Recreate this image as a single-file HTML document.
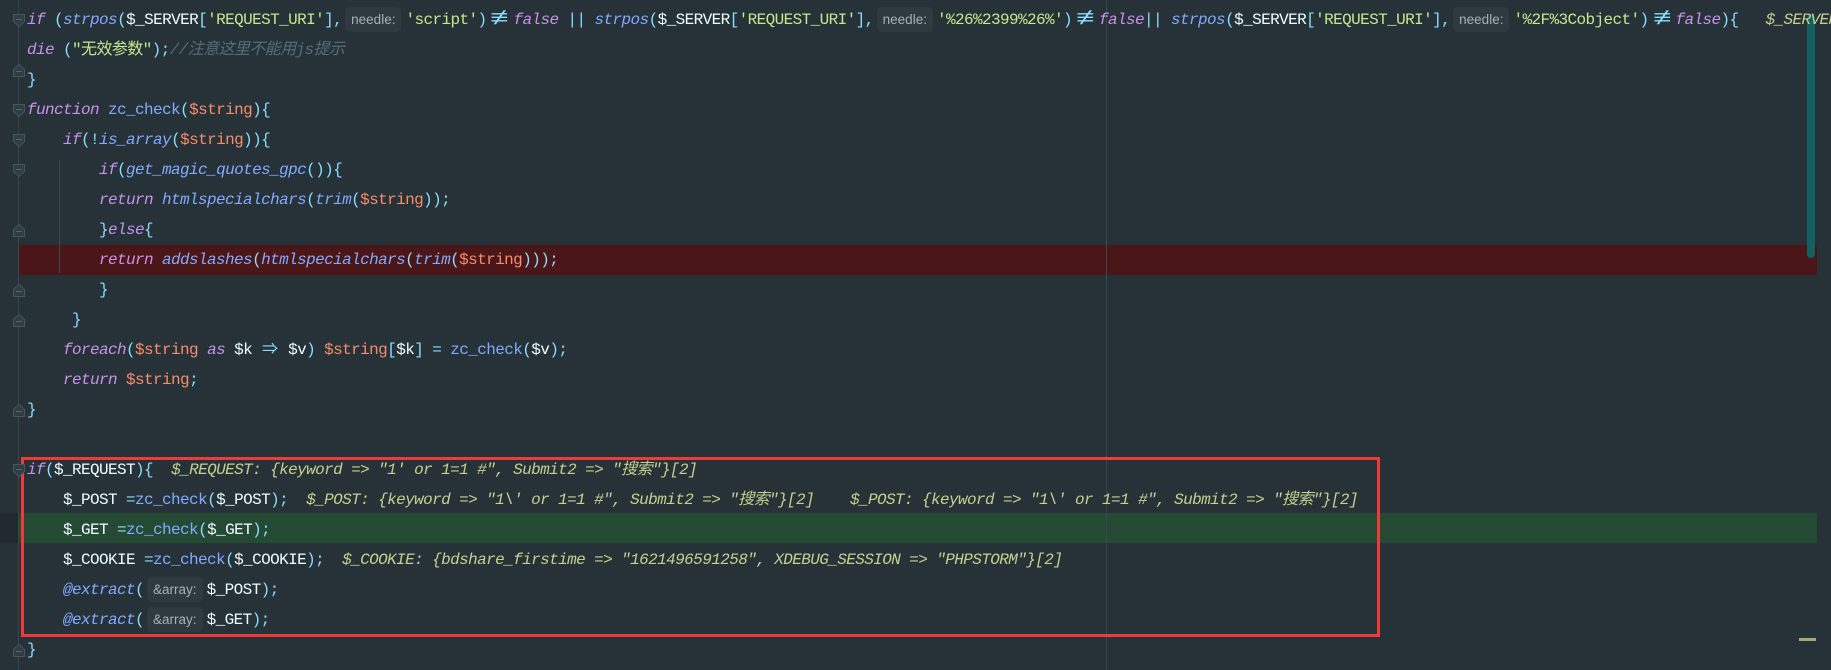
<!DOCTYPE html>
<html><head><meta charset="utf-8"><style>
*{margin:0;padding:0;box-sizing:border-box}
body{width:1831px;height:670px;background:#263238;overflow:hidden;position:relative;font-family:"Liberation Mono","Noto Sans CJK SC",monospace;font-size:16px;letter-spacing:-0.6px;color:#eeffff}
.ln{position:absolute;left:27px;height:30px;line-height:30px;white-space:pre}
.k{color:#c792ea;font-style:italic}
.f{color:#82aaff;font-style:italic}
.b{color:#82aaff}
.v{color:#f78c6c}
.p{color:#89ddff}
.s{color:#c3e88d}
.c{color:#546e7a;font-style:italic}
.d{color:#c5d08e;font-style:italic}
.h{display:inline-block;height:25px;line-height:25px;vertical-align:top;margin-top:2px;background:#2e3a40;border-radius:5px;color:#a7b0b5;font-family:"Liberation Sans",sans-serif;font-size:13.5px;letter-spacing:0;padding:0 6px;margin-left:3px;margin-right:4px}
.ne{display:inline-block;width:27px;text-align:center;color:#89ddff;font-size:20px;letter-spacing:0;transform:scaleX(1.6)}
.ar{display:inline-block;width:18px;text-align:center;color:#89ddff;letter-spacing:0}
.band{position:absolute;left:19px;width:1798px;height:30px}
</style></head><body>
<div class="band" style="top:245px;background:#4a1618"></div>
<div class="band" style="top:513px;background:#254a33"></div>
<div style="position:absolute;left:0;top:513px;width:19px;height:30px;background:#1f292e"></div>
<div style="position:absolute;left:18px;top:0;width:1px;height:670px;background:#37474f"></div>
<div style="position:absolute;left:1106px;top:0;width:1px;height:670px;background:#37474f"></div>
<div style="position:absolute;left:59px;top:160px;width:1px;height:113px;background:#37474f"></div>
<div style="position:absolute;left:1807px;top:14px;width:8px;height:244px;background:#12605f;border-radius:4px"></div>
<div style="position:absolute;left:1799px;top:638px;width:17px;height:3px;background:#a8a880"></div>
<div style="position:absolute;left:21px;top:457px;width:1359px;height:180px;border:3px solid #f03a3a"></div>

<svg style="position:absolute;left:0;top:0" width="40" height="670">
<g fill="#2f3d44" stroke="#46565e" stroke-width="1">
<path d="M13.5 14.5h11v7l-5.5 5l-5.5-5z"/>
<path d="M13.5 104.5h11v7l-5.5 5l-5.5-5z"/>
<path d="M13.5 134.5h11v7l-5.5 5l-5.5-5z"/>
<path d="M13.5 164.5h11v7l-5.5 5l-5.5-5z"/>
<path d="M13.5 464.5h11v7l-5.5 5l-5.5-5z"/>
<path d="M13.5 86.5h11v-7l-5.5-5l-5.5 5z" transform="translate(0,-10)"/>
<path d="M13.5 236.5h11v-7l-5.5-5l-5.5 5z"/>
<path d="M13.5 296.5h11v-7l-5.5-5l-5.5 5z"/>
<path d="M13.5 326.5h11v-7l-5.5-5l-5.5 5z"/>
<path d="M13.5 416.5h11v-7l-5.5-5l-5.5 5z"/>
<path d="M13.5 656.5h11v-7l-5.5-5l-5.5 5z"/>
</g>
<g stroke="#56666e" stroke-width="1">
<path d="M16 19.5h6M16 109.5h6M16 139.5h6M16 169.5h6M16 469.5h6M16 71.5h6M16 231.5h6M16 291.5h6M16 321.5h6M16 411.5h6M16 651.5h6"/>
</g>
</svg>

<div class="ln" style="top:5px"><span class="k">if</span> <span class="p">(</span><span class="f">strpos</span><span class="p">(</span>$_SERVER<span class="p">[</span><span class="s">'REQUEST_URI'</span><span class="p">],</span><span class="h">needle:</span><span class="s">'script'</span><span class="p">)</span><span class="ne">≢</span><span class="k">false</span> <span class="p">||</span> <span class="f">strpos</span><span class="p">(</span>$_SERVER<span class="p">[</span><span class="s">'REQUEST_URI'</span><span class="p">],</span><span class="h">needle:</span><span class="s">'%26%2399%26%'</span><span class="p">)</span><span class="ne">≢</span><span class="k">false</span><span class="p">||</span> <span class="f">strpos</span><span class="p">(</span>$_SERVER<span class="p">[</span><span class="s">'REQUEST_URI'</span><span class="p">],</span><span class="h">needle:</span><span class="s">'%2F%3Cobject'</span><span class="p">)</span><span class="ne">≢</span><span class="k">false</span><span class="p">){</span>   <span class="d">$_SERVER: {...}</span></div>
<div class="ln" style="top:35px"><span class="k">die</span> <span class="p">(</span><span class="s">"无效参数"</span><span class="p">);</span><span class="c">//注意这里不能用js提示</span></div>
<div class="ln" style="top:65px"><span class="p">}</span></div>
<div class="ln" style="top:95px"><span class="k">function</span> <span class="b">zc_check</span><span class="p">(</span><span class="v">$string</span><span class="p">){</span></div>
<div class="ln" style="top:125px">    <span class="k">if</span><span class="p">(!</span><span class="f">is_array</span><span class="p">(</span><span class="v">$string</span><span class="p">)){</span></div>
<div class="ln" style="top:155px">        <span class="k">if</span><span class="p">(</span><span class="f">get_magic_quotes_gpc</span><span class="p">()){</span></div>
<div class="ln" style="top:185px">        <span class="k">return</span> <span class="f">htmlspecialchars</span><span class="p">(</span><span class="f">trim</span><span class="p">(</span><span class="v">$string</span><span class="p">));</span></div>
<div class="ln" style="top:215px">        <span class="p">}</span><span class="k">else</span><span class="p">{</span></div>
<div class="ln" style="top:245px">        <span class="k">return</span> <span class="f">addslashes</span><span class="p">(</span><span class="f">htmlspecialchars</span><span class="p">(</span><span class="f">trim</span><span class="p">(</span><span class="v">$string</span><span class="p">)));</span></div>
<div class="ln" style="top:275px">        <span class="p">}</span></div>
<div class="ln" style="top:305px">     <span class="p">}</span></div>
<div class="ln" style="top:335px">    <span class="k">foreach</span><span class="p">(</span><span class="v">$string</span> <span class="k">as</span> $k <span class="ar">⇒</span> $v<span class="p">)</span> <span class="v">$string</span><span class="p">[</span>$k<span class="p">]</span> <span class="p">=</span> <span class="b">zc_check</span><span class="p">(</span>$v<span class="p">);</span></div>
<div class="ln" style="top:365px">    <span class="k">return</span> <span class="v">$string</span><span class="p">;</span></div>
<div class="ln" style="top:395px"><span class="p">}</span></div>
<div class="ln" style="top:455px"><span class="k">if</span><span class="p">(</span>$_REQUEST<span class="p">){</span>  <span class="d">$_REQUEST: {keyword =&gt; "1' or 1=1 #", Submit2 =&gt; "搜索"}[2]</span></div>
<div class="ln" style="top:485px">    $_POST <span class="p">=</span><span class="b">zc_check</span><span class="p">(</span>$_POST<span class="p">);</span>  <span class="d">$_POST: {keyword =&gt; "1\' or 1=1 #", Submit2 =&gt; "搜索"}[2]    $_POST: {keyword =&gt; "1\' or 1=1 #", Submit2 =&gt; "搜索"}[2]</span></div>
<div class="ln" style="top:515px">    $_GET <span class="p">=</span><span class="b">zc_check</span><span class="p">(</span>$_GET<span class="p">);</span></div>
<div class="ln" style="top:545px">    $_COOKIE <span class="p">=</span><span class="b">zc_check</span><span class="p">(</span>$_COOKIE<span class="p">);</span>  <span class="d">$_COOKIE: {bdshare_firstime =&gt; "1621496591258", XDEBUG_SESSION =&gt; "PHPSTORM"}[2]</span></div>
<div class="ln" style="top:575px">    <span class="f">@extract</span><span class="p">(</span><span class="h">&amp;array:</span>$_POST<span class="p">);</span></div>
<div class="ln" style="top:605px">    <span class="f">@extract</span><span class="p">(</span><span class="h">&amp;array:</span>$_GET<span class="p">);</span></div>
<div class="ln" style="top:635px"><span class="p">}</span></div>
</body></html>
